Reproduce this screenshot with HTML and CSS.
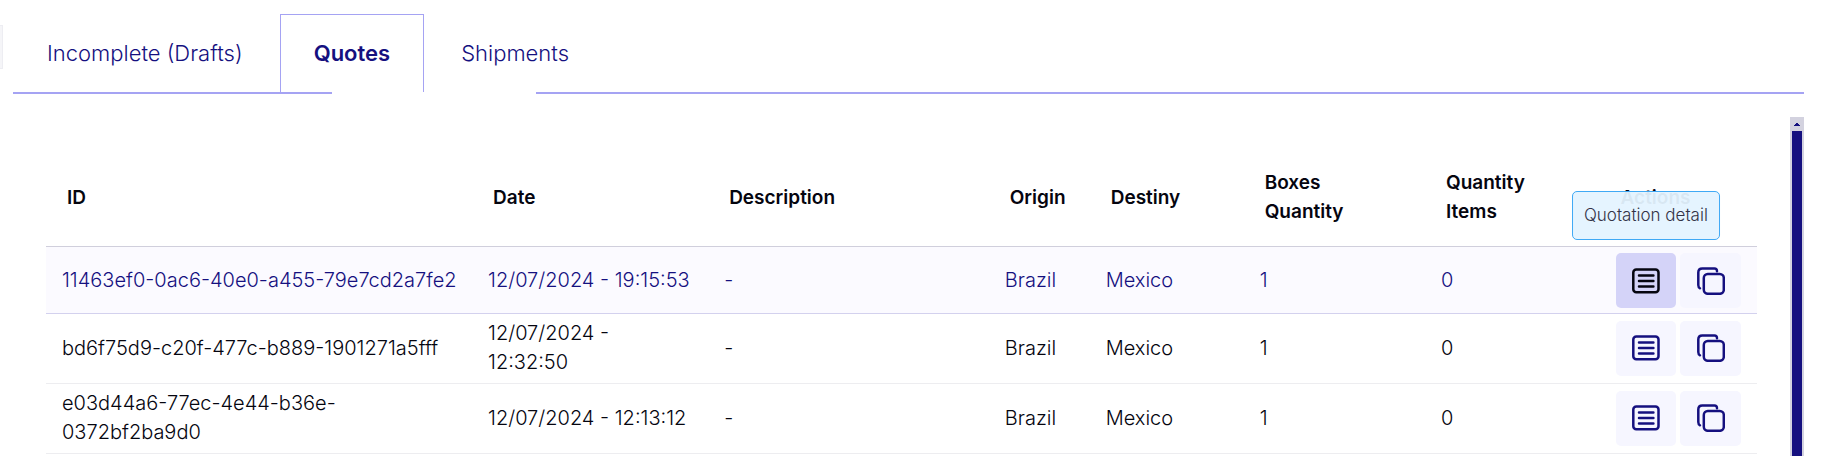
FILE: index.html
```html
<!DOCTYPE html>
<html lang="en">
<head>
<meta charset="utf-8">
<title>Quotes</title>
<link rel="stylesheet" href="styles.css">
</head>
<body>
<svg class="sprite" aria-hidden="true">
  <symbol id="icon-list" viewBox="0 0 28 26">
    <rect x="1.3" y="1.6" width="25.2" height="22.6" rx="3"/>
    <path d="M7 7.6h14.4M7 13h14.4M7 18.4h14.4"/>
  </symbol>
  <symbol id="icon-copy" viewBox="0 0 28 28">
    <rect x="6.8" y="7" width="20" height="19.800" rx="4"/>
    <path d="M20 4.200C20 2.400 19 1.400 17.500 1.400H5.300C2.700 1.400 1.300 2.800 1.300 5.400V18C1.300 19.800 1.800 20.800 3 21.300"/>
  </symbol>
</svg>
<div class="page">
  <div class="edge"></div>
  <main class="panel">
    <nav class="tabs">
      <a class="tab" href="#drafts">Incomplete (Drafts)</a>
      <a class="tab tab-active" href="#quotes" aria-current="page">Quotes</a>
      <a class="tab" href="#shipments">Shipments</a>
    </nav>
    <div class="rule"><span class="rule-start"></span><span class="rule-end"></span></div>
    <div class="scroll-area">
      <div class="table-wrap">
        <table class="quotes">
          <colgroup>
            <col class="c-id"><col class="c-date"><col class="c-desc"><col class="c-origin"><col class="c-dest"><col class="c-boxes"><col class="c-items"><col class="c-actions">
          </colgroup>
          <thead>
            <tr><th>ID</th><th>Date</th><th>Description</th><th>Origin</th><th>Destiny</th><th>Boxes<br>Quantity</th><th>Quantity<br>Items</th><th>Actions</th></tr>
          </thead>
          <tbody>
            <tr class="row-active">
              <td>11463ef0-0ac6-40e0-a455-79e7cd2a7fe2</td><td>12/07/2024 - 19:15:53</td><td>-</td><td>Brazil</td><td>Mexico</td><td>1</td><td>0</td>
              <td><div class="actions">
                <button class="action action-on" type="button" aria-label="Detail" aria-describedby="tip"><svg class="i-list"><use href="#icon-list"/></svg><span class="tooltip" id="tip" role="tooltip">Quotation detail</span></button>
                <button class="action" type="button" aria-label="Copy"><svg class="i-copy"><use href="#icon-copy"/></svg></button>
              </div></td>
            </tr>
            <tr>
              <td>bd6f75d9-c20f-477c-b889-1901271a5fff</td><td>12/07/2024 -<br>12:32:50</td><td>-</td><td>Brazil</td><td>Mexico</td><td>1</td><td>0</td>
              <td><div class="actions">
                <button class="action" type="button" aria-label="Detail"><svg class="i-list"><use href="#icon-list"/></svg></button>
                <button class="action" type="button" aria-label="Copy"><svg class="i-copy"><use href="#icon-copy"/></svg></button>
              </div></td>
            </tr>
            <tr>
              <td>e03d44a6-77ec-4e44-b36e-<br>0372bf2ba9d0</td><td>12/07/2024 - 12:13:12</td><td>-</td><td>Brazil</td><td>Mexico</td><td>1</td><td>0</td>
              <td><div class="actions">
                <button class="action" type="button" aria-label="Detail"><svg class="i-list"><use href="#icon-list"/></svg></button>
                <button class="action" type="button" aria-label="Copy"><svg class="i-copy"><use href="#icon-copy"/></svg></button>
              </div></td>
            </tr>
          </tbody>
        </table>
      </div>
      <div class="scrollbar" aria-hidden="true">
        <svg class="scroll-up" viewBox="0 0 14 14"><path d="M4 9V8h1V7h1V6h2v1h1v1h1v1z"/></svg>
        <div class="scroll-thumb"></div>
      </div>
    </div>
  </main>
</div>
</body>
</html>
```
FILE: styles.css
```css
* {
  box-sizing: border-box;
}

body {
  margin: 0;
  background: #fff;
  color: #05050f;
  font-family: Inter, "Liberation Sans", sans-serif;
  font-size: 20px;
  font-weight: 300;
  line-height: 29px;
}

.sprite {
  display: none;
}

.page {
  display: flex;
  align-items: flex-start;
  gap: 10px;
  height: 100vh;
  overflow: hidden;
}

.edge {
  width: 3px;
  height: 44px;
  margin-top: 25px;
  background: #f5f5f8;
  border: 1px solid #ededf2;
  border-left: 0;
}

.panel {
  flex: 1;
  display: flex;
  flex-direction: column;
  height: 100%;
  padding: 14px 44px 0 0;
}

.tabs {
  display: flex;
  gap: 3px;
}

.tab {
  height: 78px;
  padding: 24px 33px;
  border: 1px solid transparent;
  border-bottom: 0;
  color: #15107f;
  font-size: 22px;
  text-decoration: none;
}

.tab-active {
  border-color: #a5a3f3;
  font-weight: 600;
}

.rule {
  display: flex;
  gap: 204px;
  height: 2px;
}

.rule-start {
  width: 319px;
  background: #a5a3f3;
}

.rule-end {
  flex: 1;
  background: #a5a3f3;
}

.scroll-area {
  flex: 1;
  display: flex;
  min-height: 0;
  margin-top: 23px;
}

.table-wrap {
  flex: 1;
  padding: 29px 33px 0;
}

.quotes {
  width: 100%;
  table-layout: fixed;
  border-collapse: separate;
  border-spacing: 0;
}

.c-id { width: 24.9%; }
.c-date { width: 13.8%; }
.c-desc { width: 16.4%; }
.c-origin { width: 5.9%; }
.c-dest { width: 9%; }
.c-boxes { width: 10.6%; }
.c-items { width: 10.2%; }
.c-actions { width: 9.2%; }

.quotes th {
  padding: 22px 21px 20px;
  border-bottom: 1px solid #d0cfdc;
  font-size: 19px;
  font-weight: 600;
  text-align: left;
  white-space: nowrap;
}

.quotes td {
  padding: 5px 16px 6px;
  border-bottom: 1px solid #ededf0;
  white-space: nowrap;
}

.quotes .row-active td {
  padding: 6px 16px 5px;
  background: #fbfaff;
  border-bottom-color: #d3d1ee;
  color: #15107f;
}

.actions {
  display: flex;
  gap: 4px;
}

.action {
  position: relative;
  display: flex;
  flex: 1;
  align-items: center;
  justify-content: center;
  height: 55px;
  padding: 0;
  border: 0;
  border-radius: 5px;
  background: #f6f6ff;
  color: #15107f;
  font: inherit;
}

.action-on {
  background: #d4d3f8;
  color: #05050f;
}

.action svg {
  fill: none;
  stroke: currentColor;
  stroke-width: 2.5px;
  stroke-linecap: round;
  stroke-linejoin: round;
}

.i-list {
  width: 28px;
  height: 26px;
}

.i-copy {
  width: 28px;
  height: 28px;
}

.tooltip {
  position: absolute;
  bottom: calc(100% + 13px);
  left: 50%;
  transform: translateX(-50%);
  padding: 9px 11px;
  border: 1px solid #3fa9f5;
  border-radius: 5px;
  background: rgba(228, 243, 255, 0.95);
  color: #333346;
  font-size: 17px;
  white-space: nowrap;
}

.scrollbar {
  display: flex;
  flex-direction: column;
  width: 14px;
  background: #d3d2df;
}

.scroll-up {
  width: 14px;
  height: 14px;
  fill: #15107f;
}

.scroll-thumb {
  flex: 1;
  margin: 0 2px;
  background: #15107f;
}
```
